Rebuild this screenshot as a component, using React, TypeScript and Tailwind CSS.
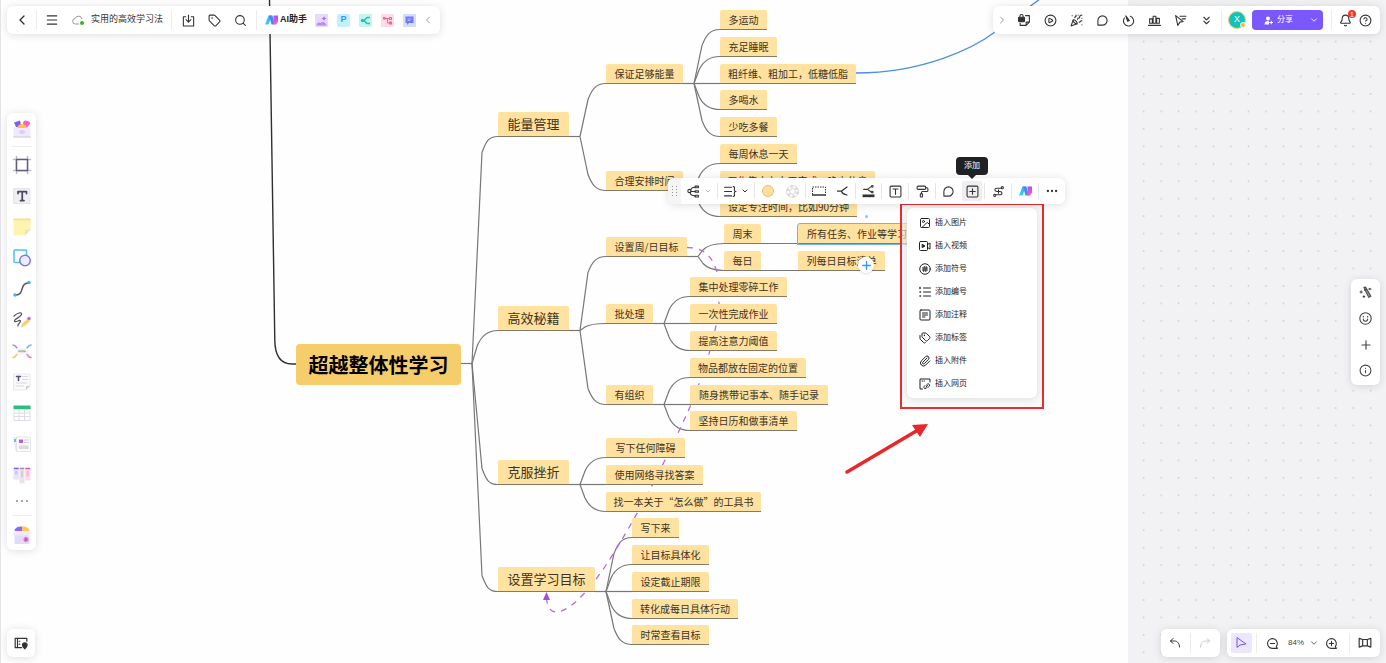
import type { ReactNode } from 'react'
import {
  ChevronDown,
  ChevronLeft,
  ChevronRight,
  ChevronsDown,
  CircleHelp,
  CirclePlay,
  Bell,
  Info,
  Menu,
  PaintRoller,
  Paperclip,
  PartyPopper,
  Plus,
  Search,
  Tag,
  Tags,
  Ellipsis,
  Image as ImageIcon,
} from 'lucide-react'

type Level = 'root' | 'main' | 'leaf'

interface MapNode {
  text: string
  x: number
  // y of the underline
  y: number
  w: number
  level: Level
  selected?: boolean
}

const leaf = (text: string, x: number, y: number, w: number, selected = false): MapNode => ({
  text, x, y, w, level: 'leaf', selected,
})
const main = (text: string, x: number, y: number, w: number): MapNode => ({ text, x, y, w, level: 'main' })

const nodes: MapNode[] = [
  { text: '超越整体性学习', x: 296, y: 385, w: 165, level: 'root' },
  main('能量管理', 498, 137, 71),
  main('高效秘籍', 498, 331, 71),
  main('克服挫折', 498, 485, 71),
  main('设置学习目标', 498, 592, 97),
  leaf('保证足够能量', 606, 84, 77),
  leaf('合理安排时间', 606, 191, 77),
  leaf('多运动', 720, 30, 47),
  leaf('充足睡眠', 720, 57, 57),
  leaf('粗纤维、粗加工，低糖低脂', 720, 84, 136),
  leaf('多喝水', 720, 110, 47),
  leaf('少吃多餐', 720, 137, 57),
  leaf('每周休息一天', 720, 164, 77),
  leaf('工作集中在白天完成，晚上休息', 720, 191, 155),
  leaf('设定专注时间，比如90分钟', 720, 217, 137),
  leaf('设置周/日目标', 606, 257, 81),
  leaf('周末', 724, 244, 37),
  leaf('每日', 724, 271, 37),
  leaf('所有任务、作业等学习任务', 798, 244, 138, true),
  leaf('列每日目标清单', 798, 271, 87),
  leaf('批处理', 606, 324, 47),
  leaf('集中处理零碎工作', 690, 297, 97),
  leaf('一次性完成作业', 690, 324, 87),
  leaf('提高注意力阈值', 690, 351, 87),
  leaf('有组织', 606, 405, 47),
  leaf('物品都放在固定的位置', 690, 378, 116),
  leaf('随身携带记事本、随手记录', 690, 405, 138),
  leaf('坚持日历和做事清单', 690, 431, 107),
  leaf('写下任何障碍', 606, 458, 79),
  leaf('使用网络寻找答案', 606, 485, 97),
  leaf('找一本关于“怎么做”的工具书', 606, 512, 155),
  leaf('写下来', 632, 538, 47),
  leaf('让目标具体化', 632, 565, 77),
  leaf('设定截止期限', 632, 592, 77),
  leaf('转化成每日具体行动', 632, 619, 106),
  leaf('时常查看目标', 632, 645, 77),
]

// each fork: right edge of the parent, its line, and the children it reaches
const forks = [
  { from: 461, y: 364, to: 498, children: [137, 331, 485, 592] },
  { from: 569, y: 137, to: 606, children: [84, 191] },
  { from: 683, y: 84, to: 720, children: [30, 57, 84, 110, 137] },
  { from: 683, y: 191, to: 720, children: [164, 191, 217] },
  { from: 569, y: 331, to: 606, children: [257, 324, 405] },
  { from: 687, y: 257, to: 724, children: [244, 271] },
  { from: 653, y: 324, to: 690, children: [297, 324, 351] },
  { from: 653, y: 405, to: 690, children: [378, 405, 431] },
  { from: 569, y: 485, to: 606, children: [458, 485, 512] },
  { from: 595, y: 592, to: 632, children: [538, 565, 592, 619, 645] },
]

// straight run out of the parent, then a rounded corner into the child's line
function branch(x0: number, y0: number, x1: number, y1: number) {
  const a = y0 - 0.5
  const b = y1 - 0.5
  const dy = Math.abs(b - a)
  if (dy === 0) return `M${x0} ${a}H${x1}`
  const dir = b > a ? -1 : 1
  const r = Math.min(16, dy * 0.5)
  const kx = x0 + (dy < 40 ? 5 : dy < 100 ? 8 : 10)
  return `M${x0} ${a}L${kx} ${b + dir * r}C${kx + 4} ${b + dir * r * 0.35} ${x1 - 10} ${b} ${x1} ${b}`
}

function Edges() {
  return (
    <svg className="absolute inset-0 h-full w-full" fill="none">
      <path d="M269.5 0L274.8 340Q275 364 292 364H296" stroke="#2f2f2f" strokeWidth="1.4" />
      <g stroke="#777" strokeWidth="1.2">
        {forks.map((f) => (
          <g key={`${f.from}-${f.y}`}>
            <path d={`M${f.from} ${f.y - 0.5}h11`} />
            {f.children.map((c) => (
              <path key={c} d={branch(f.from + 11, f.y, f.to, c)} />
            ))}
          </g>
        ))}
        <path d="M761 243.5H798M761 270.5H798" />
      </g>
      <path d="M856 73C925 73 975 47 995 32L1040 -1" stroke="#4a90e2" strokeWidth="1.3" />
      <path
        d="M687 247.5C704 247.5 712 256 717 272C726 310 707 365 690 407C666 460 640 512 608 562C595 582 572 612 556 612C550 612 547 606 546.5 598"
        stroke="#b56be0"
        strokeWidth="1.3"
        strokeDasharray="6 6"
      />
      <path d="M546.5 592L550 600H543Z" fill="#a24fd6" />
    </svg>
  )
}

const nodeStyle: Record<Level, string> = {
  root: 'h-[41px] rounded bg-[#f6cd6b] text-xl font-bold text-black',
  main: 'h-[25px] rounded-t-xs border-b border-[#857a62] bg-[#ffe1a0] text-[13px] text-[#3d3424]',
  leaf: 'h-5 rounded-t-xs border-b border-[#857a62] bg-[#ffe1a0] text-[10px] text-[#3d3424]',
}
const nodeHeight: Record<Level, number> = { root: 41, main: 25, leaf: 20 }

function Node({ node }: { node: MapNode }) {
  return (
    <div
      className={`absolute flex items-center justify-center whitespace-nowrap ${nodeStyle[node.level]} ${
        node.selected ? 'outline outline-[#6bb5f5]' : ''
      }`}
      style={{ left: node.x, top: node.y - nodeHeight[node.level], width: node.w }}
    >
      {node.text}
    </div>
  )
}

function Icon({ size = 14, className, children }: { size?: number; className?: string; children: ReactNode }) {
  return (
    <svg
      width={size}
      height={size}
      viewBox="0 0 24 24"
      fill="none"
      stroke="currentColor"
      strokeWidth="2"
      strokeLinecap="round"
      strokeLinejoin="round"
      className={className}
    >
      {children}
    </svg>
  )
}

function Bubble() {
  return (
    <Icon size={13}>
      <path d="M3.500 20.500V12a8.500 8.500 0 1 1 8.500 8.500z" />
    </Icon>
  )
}

function AiLogo() {
  return (
    <svg width="13" height="10" viewBox="0 0 26 20" fill="none">
      <defs>
        <linearGradient id="ai-a" x1="0" x2="1" y1="1" y2="0">
          <stop stopColor="#27e0f0" />
          <stop offset="1" stopColor="#4a9cf7" />
        </linearGradient>
        <linearGradient id="ai-b" x1="0" x2="0" y1="0" y2="1">
          <stop stopColor="#b04bff" />
          <stop offset="1" stopColor="#ff5fb0" />
        </linearGradient>
      </defs>
      <path d="M7 1h7l-7 18H0z" fill="url(#ai-a)" />
      <path d="M8 1h7l4 18h-6z" fill="#3f8bf8" />
      <path d="M17 1h9v12l-4 6h-5z" fill="url(#ai-b)" />
    </svg>
  )
}

function Btn({ label, className = 'h-full w-[26px]', children }: { label: string; className?: string; children: ReactNode }) {
  return (
    <button type="button" aria-label={label} className={`flex shrink-0 items-center justify-center ${className}`}>
      {children}
    </button>
  )
}

const Divider = () => <span className="h-5 w-px shrink-0 bg-[#ececee]" />

const panel = 'bg-white rounded-md shadow-[0_1px_8px_rgba(0,0,0,0.13)]'

function FileBar() {
  return (
    <div className={`flex h-7 items-center ${panel}`}>
      <Btn label="返回" className="w-[29px]"><ChevronLeft size={16} /></Btn>
      <Divider />
      <Btn label="菜单" className="w-[30px]"><Menu size={14} /></Btn>
      <span className="flex w-6 justify-end pr-1.5">
        <svg width="13" height="11" viewBox="0 0 26 22" fill="none">
          <path d="M14 18H7a5.500 5.500 0 0 1-.5-11A7 7 0 0 1 20 8" stroke="#999" strokeWidth="2" />
          <circle cx="20" cy="16" r="4" fill="#3fb618" />
        </svg>
      </span>
      <span className="text-[9px] text-[#333]">实用的高效学习法</span>
      <span className="w-2" />
      <Divider />
      <span className="w-[3px]" />
      <Btn label="保存">
        <Icon size={13}>
          <path d="M7 5H2.500v17h19V5H17M12 2v13m-4.500-4.500L12 15l4.500-4.500" />
        </Icon>
      </Btn>
      <Btn label="标签"><Tag size={13} /></Btn>
      <Btn label="搜索"><Search size={13} /></Btn>
      <span className="w-[3px]" />
      <Divider />
      <button type="button" className="flex h-full items-center gap-0.5 px-2 text-[9px] font-bold text-[#222]">
        <AiLogo />
        AI助手
      </button>
      <div className="flex items-center gap-[9px]">
        <button type="button" aria-label="图片">
          <svg width="13" height="13" viewBox="0 0 26 26">
            <rect width="26" height="26" rx="2" fill="#e8d9ff" />
            <path d="M3 23c0-5 4-7 8-5 3-4 11-2 12 5z" fill="#b58df5" />
            <path d="M18 4l1.500 3.500L23 9l-3.500 1.500L18 14l-1.500-3.500L13 9l3.500-1.500z" fill="#a46df0" />
          </svg>
        </button>
        <button type="button" className="flex size-[13px] items-center justify-center rounded-xs bg-[#c4efff] text-[9px] font-bold text-[#2b9cf2]">
          P
        </button>
        <button type="button" aria-label="思维导图">
          <svg width="13" height="13" viewBox="0 0 26 26" fill="none" stroke="#16c7b7" strokeWidth="3">
            <rect width="26" height="26" rx="2" fill="#c6f5ef" stroke="none" />
            <path d="M22 7h-5c-4 0-4 6-8 6 4 0 4 6 8 6h5" />
            <circle cx="7" cy="13" r="3.500" fill="#16c7b7" stroke="none" />
          </svg>
        </button>
        <button type="button" aria-label="流程图">
          <svg width="13" height="13" viewBox="0 0 26 26" fill="none" stroke="#fb5f95" strokeWidth="2">
            <rect width="26" height="26" rx="2" fill="#ffdbe8" stroke="none" />
            <path d="M4 9h9v9h4M13 9h4" />
            <rect x="4" y="6" width="5" height="5" fill="#fb5f95" stroke="none" />
            <rect x="17" y="7" width="4" height="4" />
            <rect x="17" y="16" width="4" height="4" />
          </svg>
        </button>
        <button type="button" aria-label="对话">
          <svg width="13" height="13" viewBox="0 0 26 26">
            <rect width="26" height="26" rx="2" fill="#d6dcff" />
            <path d="M5 5h16v13h-9l-4 4v-4H5z" fill="#6c79fb" />
            <path d="M9 10h8M9 13h5" stroke="#c6cdff" strokeWidth="1.500" />
          </svg>
        </button>
      </div>
      <Btn label="收起" className="w-[24px] text-[#999]"><ChevronLeft size={12} /></Btn>
    </div>
  )
}

function ShareBar() {
  return (
    <div className={`flex h-7 items-center text-[#333] ${panel}`}>
      <Btn label="展开" className="w-[18px] text-[#999]"><ChevronRight size={12} /></Btn>
      <Btn label="锁定">
        <Icon size={13}>
          <rect x="1" y="6" width="11" height="8" rx="1" fill="currentColor" />
          <path d="M3.500 6V4a3 3 0 0 1 6 0v2M14 3h7v12l-6 6H4v-4M21 15h-6v6" />
        </Icon>
      </Btn>
      <Btn label="演示"><CirclePlay size={13} /></Btn>
      <Btn label="庆祝"><PartyPopper size={13} /></Btn>
      <Btn label="评论"><Bubble /></Btn>
      <Btn label="计时">
        <Icon size={13}>
          <path d="M15.500 4.200A9.300 9.300 0 1 1 4.500 7.500" />
          <path d="M7 3.500l6.500 8.500-3 1.500z" fill="currentColor" />
        </Icon>
      </Btn>
      <Btn label="投票">
        <Icon size={13}>
          <path d="M1 21h22M3 17V9h5v8zM9.500 17V4h5v13zM16 17V8h5v9z" />
        </Icon>
      </Btn>
      <Btn label="跟随">
        <Icon size={13}>
          <path d="M3 3l4 18 4-6 6-1zM11 4h11M15 9h6" />
        </Icon>
      </Btn>
      <Btn label="更多"><ChevronsDown size={13} /></Btn>
      <span className="w-0.5" />
      <Divider />
      <button type="button" className="relative mx-1.5 flex size-[18px] items-center justify-center rounded-full border border-[#f8cf7b] bg-[#13c2b8] text-[9px] text-white">
        X
        <span className="absolute -right-px bottom-0 size-1.5 rounded-full border border-white bg-[#f5b83d]" />
      </button>
      <div className="flex h-5 items-center rounded-sm bg-[#7a57ff] text-white">
        <button type="button" className="flex h-full items-center gap-1 pr-4 pl-3 text-[8px]">
          <svg width="9" height="9" viewBox="0 0 18 18" fill="currentColor">
            <circle cx="8" cy="5" r="4" />
            <path d="M1 17c0-5 3-7 7-7l2 1v6z" />
            <path d="M14.500 9.500v7M11 13h7" stroke="currentColor" strokeWidth="2" />
          </svg>
          分享
        </button>
        <button type="button" aria-label="分享选项" className="pr-1">
          <ChevronDown size={10} />
        </button>
      </div>
      <span className="w-2" />
      <Divider />
      <button type="button" aria-label="通知" className="relative ml-1.5 flex h-full w-[14px] items-center justify-center">
        <Bell size={13} />
        <span className="absolute top-1 -right-1 flex size-2 items-center justify-center rounded-full bg-[#f5352f] text-[7px] leading-none text-white">
          1
        </span>
      </button>
      <Btn label="帮助"><CircleHelp size={13} /></Btn>
      <span className="w-0.5" />
    </div>
  )
}

function Tool({ label, children }: { label: string; children: ReactNode }) {
  return (
    <button type="button" aria-label={label} className="flex h-[31px] w-full items-center justify-center">
      <svg width="20" height="20" viewBox="0 0 40 40" fill="none" strokeLinecap="round" strokeLinejoin="round">
        {children}
      </svg>
    </button>
  )
}

function ToolRail() {
  return (
    <nav className={`flex w-[29px] flex-col items-center ${panel}`}>
      <Tool label="模板">
        <rect x="3" y="17" width="34" height="20" rx="2" fill="#eee9fd" />
        <path d="M3 36h34" stroke="#cfcad8" strokeWidth="2" />
        <path d="M4 7l12-4 3 13H8z" fill="#7d5cff" />
        <path d="M22 8a5 5 0 0 1 8-4 5 5 0 0 1 6 6l-6 7-7-4z" fill="#fb5fd0" />
        <path d="M11 18a9 8 0 0 1 18 0z" fill="#ffc23c" />
        <ellipse cx="20" cy="26" rx="6" ry="4" fill="#d9d0fa" />
      </Tool>
      <span className="my-0.5 h-px w-5 shrink-0 bg-[#ececee]" />
      <Tool label="画框">
        <path d="M9 3v34M31 3v34M3 9h34M3 31h34" stroke="#b9b8cc" strokeWidth="3" />
        <rect x="9" y="9" width="22" height="22" stroke="#626079" strokeWidth="3" fill="#fff" />
      </Tool>
      <Tool label="文本">
        <rect x="4" y="5" width="32" height="30" fill="#f0f0f4" stroke="#e3e3ea" strokeWidth="2" />
        <path d="M12 15v-4h17v4M20.500 11v18M17 29h7" stroke="#4b4862" strokeWidth="3.500" />
      </Tool>
      <Tool label="便签">
        <path d="M3 3h34v22L26 37H3z" fill="#fff3b0" />
        <path d="M3 3h34v4H3z" fill="#fbdf9f" />
        <path d="M37 25L26 37V28q0-3 3-3z" fill="#e9e3c4" />
      </Tool>
      <Tool label="图形">
        <rect x="4" y="4" width="25" height="25" rx="2" stroke="#4fc0e8" strokeWidth="3" />
        <circle cx="26" cy="25" r="10.500" stroke="#7d78f5" strokeWidth="3" fill="#eeedff" />
      </Tool>
      <Tool label="连线">
        <path d="M7 32c19 1 7-24 26-24" stroke="#55536b" strokeWidth="3" />
        <circle cx="6" cy="32" r="3.500" fill="#3fb3f5" />
        <circle cx="34" cy="7" r="3.500" fill="#3fb3f5" />
      </Tool>
      <Tool label="画笔">
        <path d="M4 12c6-6 16-9 15-3-2 6-15 9-14 13s12-4 12 0-7 7-5 10" stroke="#55536b" strokeWidth="2.500" />
        <path d="M18 35l2-7 11-11 5 5-11 10z" fill="#fbcf6a" />
        <circle cx="34" cy="17" r="3.500" fill="#b06af2" />
      </Tool>
      <Tool label="思维导图">
        <path d="M2 8c7 0 7 9 12 9" stroke="#b083ea" strokeWidth="3" />
        <path d="M38 8c-7 0-7 9-12 9" stroke="#67b3f3" strokeWidth="3" />
        <path d="M2 33c7 0 7-9 12-9" stroke="#f5c65c" strokeWidth="3" />
        <path d="M38 33c-7 0-7-9-12-9" stroke="#f17b9c" strokeWidth="3" />
        <rect x="9" y="14" width="22" height="13" rx="2" fill="#f4f4f6" />
        <path d="M14 20.500h12" stroke="#b5b5bb" strokeWidth="4" />
      </Tool>
      <Tool label="文档">
        <path d="M4 4h32v24l-8 8H4z" fill="#fafafb" stroke="#e2e2e6" strokeWidth="1.500" />
        <path d="M9 9h8M13 9v8" stroke="#55506e" strokeWidth="3" />
        <path d="M21 9h10M21 15h10M9 22h20M9 28h14" stroke="#d8d8de" strokeWidth="2" />
        <path d="M36 28l-8 8v-8z" fill="#cfcfd5" />
      </Tool>
      <Tool label="表格">
        <rect x="3" y="6" width="34" height="30" rx="2" fill="#dcdde0" />
        <path d="M3 5h34v7H3z" fill="#28c07a" />
        <path d="M5 14h8v5H5zM15 14h9v5h-9zM26 14h9v5h-9zM5 21h8v5H5zM15 21h9v5h-9zM26 21h9v5h-9zM5 28h8v6H5zM15 28h9v6h-9zM26 28h9v6h-9z" fill="#fff" />
      </Tool>
      <Tool label="卡片">
        <path d="M3 7l7-2v28H7z" fill="#e9e9ee" />
        <rect x="9" y="6" width="28" height="29" rx="2" fill="#fafafb" stroke="#dcdce2" strokeWidth="1.500" />
        <path d="M4 10h4v6H4z" fill="#62bff5" />
        <rect x="14" y="11" width="8" height="7" fill="#b45cf0" />
        <path d="M25 12h8M25 17h8" stroke="#cfcfd6" strokeWidth="2" />
        <rect x="14" y="23" width="19" height="7" fill="#d9d9df" />
      </Tool>
      <Tool label="看板">
        <rect x="3" y="5" width="11" height="24" fill="#e8e2fd" />
        <rect x="15" y="5" width="10" height="32" fill="#e6e6e8" />
        <rect x="26" y="5" width="11" height="26" fill="#fddcf0" />
        <path d="M5 7h7" stroke="#7b5cf5" strokeWidth="3" />
        <path d="M17 7h6" stroke="#999" strokeWidth="3" />
        <path d="M28 7h7" stroke="#ee4fb0" strokeWidth="3" />
        <path d="M6 12h5v7H6z" fill="#cfc4fb" />
        <path d="M18 12h4v12h-4z" fill="#cfcfd3" />
        <path d="M29 12h5v11h-5z" fill="#fbb8e2" />
      </Tool>
      <button type="button" aria-label="更多工具" className="flex h-[22px] w-full items-center justify-center gap-[3px]">
        <span className="size-0.5 rounded-full bg-[#888]" />
        <span className="size-0.5 rounded-full bg-[#888]" />
        <span className="size-0.5 rounded-full bg-[#888]" />
      </button>
      <span className="my-[3px] h-px w-5 shrink-0 bg-[#ececee]" />
      <Tool label="素材">
        <path d="M5 12a13 9 0 0 1 15-9v11z" fill="#8d67fb" />
        <path d="M20 3a13 9 0 0 1 15 10l-15 1z" fill="#ffc74c" />
        <path d="M5 17h30v21H5z" fill="#e4dbfc" />
        <path d="M0 18l7-6h26l7 6-7 3H7z" fill="#efe9fe" />
        <circle cx="28" cy="29" r="5" fill="#f36fc0" />
        <path d="M26 25l5 4-5 4z" fill="#7d6bf8" />
      </Tool>
    </nav>
  )
}

function SideRail() {
  return (
    <nav className={`flex w-[29px] flex-col items-center py-px text-[#444] ${panel}`}>
      <Btn label="魔法" className="h-[26px] w-full">
        <Icon size={13}>
          <path d="M9 3l9 18 4-2L12 2zM10 8l4-2" fill="#999" />
          <path d="M2 11h4M4 9v4M20 4v3M18 5.500h4M9 18v3M7.500 19.500h3" />
        </Icon>
      </Btn>
      <Btn label="表情" className="h-[26px] w-full">
        <Icon size={13}>
          <circle cx="12" cy="12" r="10.500" />
          <path d="M8 8v1M16 8v1M8 13a4 4 0 0 0 8 0" />
        </Icon>
      </Btn>
      <Btn label="添加组件" className="h-[26px] w-full"><Plus size={14} /></Btn>
      <Btn label="信息" className="h-[26px] w-full"><Info size={13} /></Btn>
    </nav>
  )
}

const zoomLens = 'M12 21a9 9 0 1 1 7-3.500l2 3.500z'

function BottomBar() {
  return (
    <footer className="flex justify-between">
      <div className={`flex h-7 ${panel}`}>
        <Btn label="图层" className="w-7">
          <Icon size={14}>
            <path d="M22 9V4H2v16h11M6 4v16M9 9h1M9 14h1" />
            <path d="M18.500 22s-4-3.500-4-6.500a4 4 0 0 1 8 0c0 3-4 6.500-4 6.500z" fill="currentColor" />
          </Icon>
        </Btn>
      </div>
      <div className="flex gap-[7px]">
        <div className={`flex h-7 items-center text-[#333] ${panel}`}>
          <Btn label="撤销" className="w-[29px]">
            <Icon size={12}><path d="M8 3L3 8l5 5M3 8h8c6 0 10 5 10 12" /></Icon>
          </Btn>
          <Divider />
          <Btn label="重做" className="w-[29px] text-[#ccc]">
            <Icon size={12}><path d="M16 3l5 5-5 5M21 8h-8C7 8 3 13 3 20" /></Icon>
          </Btn>
        </div>
        <div className={`flex h-7 items-center text-[#333] ${panel}`}>
          <button type="button" aria-label="选择" className="mx-1 flex h-5 w-[21px] items-center justify-center rounded-xs bg-[#ece6ff] text-[#7350f5]">
            <Icon size={12}><path d="M4 2v19l6-5 11-2z" /></Icon>
          </button>
          <Divider />
          <Btn label="缩小" className="w-[31px]">
            <Icon size={13}><path d={zoomLens} /><path d="M8 12h8" /></Icon>
          </Btn>
          <button type="button" className="flex items-center gap-[5px] text-[8px] text-[#444]">
            84%
            <ChevronDown size={10} />
          </button>
          <Btn label="放大" className="w-6">
            <Icon size={13}><path d={zoomLens} /><path d="M8 12h8M12 8v8" /></Icon>
          </Btn>
          <span className="w-1.5" />
          <Divider />
          <Btn label="小地图" className="w-[30px]">
            <Icon size={14}>
              <path d="M2 4l6 2h8l6-2v15l-6-2H8l-6 2zM8 6v11M16 6v11" />
            </Icon>
          </Btn>
        </div>
      </div>
    </footer>
  )
}

const Rule = () => <span className="h-4 w-px shrink-0 bg-[#e6e6e9]" />

function NodeToolbar() {
  return (
    <div className={`absolute top-[178px] left-[668px] flex h-[26px] items-center text-[#333] ${panel}`}>
      <span className="grid h-full w-[13px] grid-cols-2 place-content-center justify-items-center gap-y-0.5 rounded-l-md bg-[#f5f5f6] px-[3px]">
        {[0, 1, 2, 3, 4, 5, 6, 7].map((i) => (
          <span key={i} className="size-px bg-[#999]" />
        ))}
      </span>
      <button type="button" aria-label="结构" className="flex h-full w-9 items-center justify-center gap-1">
        <Icon size={13}>
          <path d="M7 9c1-4 4-5 8-5M7 12h8M6 14c0 4 4 6 9 6" />
          <circle cx="4.500" cy="11" r="3" />
          <rect x="15" y="2" width="6" height="3" />
          <rect x="15" y="10.500" width="6" height="3" />
          <rect x="15" y="19" width="6" height="3" />
        </Icon>
        <ChevronDown size={8} className="text-[#999]" />
      </button>
      <Rule />
      <button type="button" aria-label="概要" className="flex h-full w-9 items-center justify-center gap-1">
        <Icon size={13}>
          <path d="M1 4h13M1 12h13M1 20h13M17 3c4 0 2 4 2 6 0 2 1 3 3 3-2 0-3 1-3 3 0 2 2 6-2 6" />
        </Icon>
        <ChevronDown size={8} strokeWidth={3} />
      </button>
      <Rule />
      <Btn label="填充颜色"><span className="size-3 rounded-full border border-[#e0c078] bg-[#ffdf9b]" /></Btn>
      <Btn label="边框颜色" className="mr-0.5 w-[22px]">
        <svg width="13" height="13" viewBox="0 0 26 26" fill="none">
          <circle cx="13" cy="13" r="9" stroke="#ddd" strokeWidth="6" strokeDasharray="4.700 4.700" />
          <circle cx="13" cy="13" r="12" stroke="#bbb" />
          <circle cx="13" cy="13" r="5.500" stroke="#bbb" />
        </svg>
      </Btn>
      <Rule />
      <Btn label="边框样式">
        <svg width="14" height="10" viewBox="0 0 28 20" fill="none" stroke="currentColor" strokeWidth="2">
          <path d="M1 17V2h26v15" strokeDasharray="3 2" />
          <path d="M0 18h28" strokeWidth="3" />
        </svg>
      </Btn>
      <Btn label="分支样式" className="mr-0.5 w-[21px]">
        <Icon size={12}><path d="M1 12h8l11-8M9 12c1 4 5 7 11 8" strokeWidth="2.500" /></Icon>
      </Btn>
      <Rule />
      <Btn label="线条颜色" className="w-[25px]">
        <Icon size={13}>
          <path d="M3 8h7l7-5M10 8l7 5" />
          <circle cx="19" cy="2.500" r="1.500" />
          <circle cx="19" cy="13" r="1.500" />
          <path d="M1 20h22" strokeWidth="5" strokeLinecap="butt" />
        </Icon>
      </Btn>
      <Rule />
      <Btn label="文字">
        <Icon size={13}>
          <rect x="2" y="2" width="20" height="20" rx="2" />
          <path d="M7.500 7.500h9M12 7.500V17" />
        </Icon>
      </Btn>
      <Rule />
      <Btn label="格式刷"><PaintRoller size={13} /></Btn>
      <Rule />
      <Btn label="批注" className="w-[25px]"><Bubble /></Btn>
      <button type="button" aria-label="添加" className="relative mx-px flex size-5 items-center justify-center rounded-xs bg-[#eeeef0]">
        <Icon size={13}>
          <rect x="2" y="2" width="20" height="20" rx="2" />
          <path d="M7 12h10M12 7v10" />
        </Icon>
        <span role="tooltip" className="absolute bottom-[26px] flex h-[18px] w-8 items-center justify-center rounded-sm bg-[#202124] text-[8px] text-white">
          添加
          <span className="absolute -bottom-1 border-x-4 border-t-4 border-x-transparent border-t-[#202124]" />
        </span>
      </button>
      <span className="w-px" />
      <Rule />
      <Btn label="关联线">
        <Icon size={13}>
          <path d="M17 6H9c-5 0-5 5 0 6h6c5 1 4 6 0 6H8" />
          <circle cx="19" cy="5" r="2" />
          <circle cx="5" cy="19" r="2" />
          <path d="M12 9v6" />
        </Icon>
      </Btn>
      <Rule />
      <Btn label="AI"><AiLogo /></Btn>
      <Rule />
      <Btn label="更多"><Ellipsis size={14} /></Btn>
    </div>
  )
}

const insertItems: { label: string; icon: ReactNode }[] = [
  { label: '插入图片', icon: <ImageIcon size={12} /> },
  {
    label: '插入视频',
    icon: (
      <Icon size={12}>
        <rect x="1" y="3" width="16" height="18" rx="2" />
        <path d="M17 9l5-3v12l-5-3" />
        <path d="M7 9l5 3-5 3z" fill="currentColor" />
      </Icon>
    ),
  },
  {
    label: '添加符号',
    icon: (
      <Icon size={12}>
        <circle cx="12" cy="12" r="10.500" />
        <path d="M10.500 7l-1 10M14.500 7l-1 10M7 10h10M7 14h10" />
      </Icon>
    ),
  },
  {
    label: '添加编号',
    icon: (
      <Icon size={12}>
        <path d="M9 4h14M9 12h14M9 20h14" />
        <path d="M2 3v2M2 12h1M2 20h1" strokeWidth="3" />
      </Icon>
    ),
  },
  {
    label: '添加注释',
    icon: (
      <Icon size={12}>
        <rect x="2" y="2" width="20" height="20" rx="2" />
        <path d="M7 8h10M7 12h10M7 16h5" />
      </Icon>
    ),
  },
  { label: '添加标签', icon: <Tags size={12} /> },
  { label: '插入附件', icon: <Paperclip size={12} /> },
  {
    label: '插入网页',
    icon: (
      <Icon size={12}>
        <path d="M22 8V2H2v20h5M6 6h1M10 6h1" />
        <path d="M15 14l2-2a3 3 0 0 1 4 4l-2 2M17 18l-3 3a3 3 0 0 1-4-4l2-2M14 18l3-3" />
      </Icon>
    ),
  },
]

function InsertMenu() {
  return (
    <div className="absolute top-[203px] left-[900px] border-2 border-[#ee2b2f] bg-[#f6f6f7]/60 px-[5px] pt-[3px] pb-[9px]">
      <ul className={`w-[130px] py-[3px] ${panel}`}>
        {insertItems.map((item) => (
          <li key={item.label}>
            <button type="button" className="flex w-full items-center gap-1 py-[6px] pl-3 text-[8px] leading-[11px] text-[#222]">
              <span className="flex h-[11px] items-center">{item.icon}</span>
              {item.label}
            </button>
          </li>
        ))}
      </ul>
    </div>
  )
}

function Canvas() {
  return (
    <div className="absolute inset-0 flex border-l border-[#e4e4e6]">
      <div className="w-[1127px] shrink-0 bg-[#fefefe]" />
      <svg className="h-full flex-1 bg-[#f2f2f4]">
        <defs>
          <pattern id="dots" width="17.460" height="17.450" x="6.500" y="-2" patternUnits="userSpaceOnUse">
            <circle cx="9.200" cy="8.700" r="0.900" fill="#cfcfd3" />
          </pattern>
        </defs>
        <rect width="100%" height="100%" fill="url(#dots)" />
      </svg>
    </div>
  )
}

export default function App() {
  return (
    <main
      className="relative h-screen overflow-hidden bg-white font-['Liberation_Sans','Noto_Sans_CJK_SC',sans-serif] text-[#333]"
    >
      <Canvas />
      <div className="absolute inset-0 font-['Noto_Sans_CJK_SC',sans-serif]">
        <Edges />
        {nodes.map((n) => (
          <Node key={n.text} node={n} />
        ))}
        <span className="absolute top-[215px] left-[865px] size-[3px] rounded-full bg-[#8fc4f7]" />
        <button type="button" aria-label="添加子主题" className="absolute top-[257px] left-[858px] flex size-4 items-center justify-center rounded-full bg-white text-[#2f9bf3] shadow">
          <Plus size={13} strokeWidth={2.5} />
        </button>
      </div>

      <div className="relative flex h-full flex-col justify-between py-[6px] pr-[6px] pl-[7px]">
        <header className="flex items-center justify-between">
          <FileBar />
          <ShareBar />
        </header>
        <div className="flex items-center justify-between">
          <ToolRail />
          <SideRail />
        </div>
        <BottomBar />
      </div>

      <InsertMenu />
      <NodeToolbar />
      <svg className="absolute top-[420px] left-[844px]" width="86" height="56" viewBox="0 0 86 56">
        <path d="M3 52L74 10" stroke="#e8262b" strokeWidth="3.500" strokeLinecap="round" />
        <path d="M84 4L76 17L68 5Z" fill="#e8262b" />
      </svg>
    </main>
  )
}
